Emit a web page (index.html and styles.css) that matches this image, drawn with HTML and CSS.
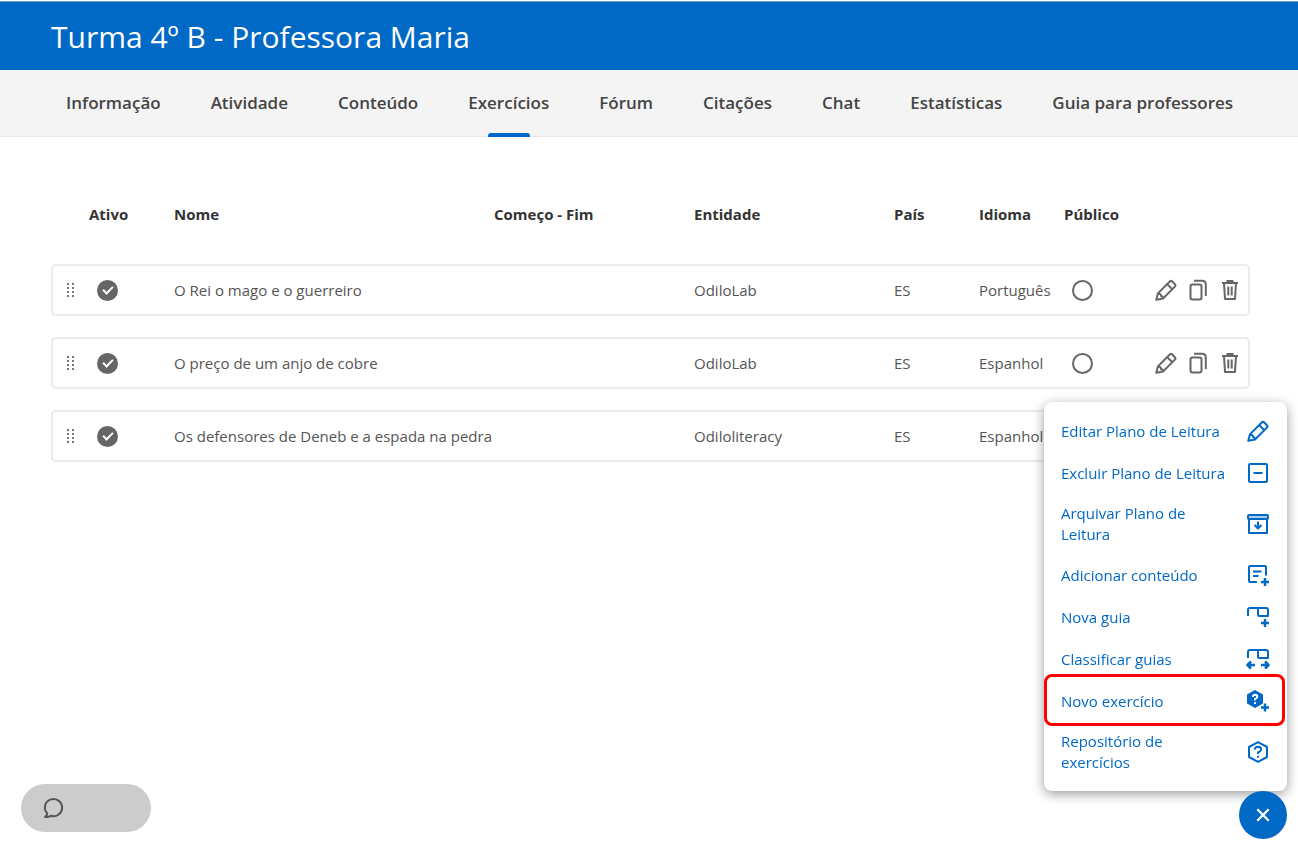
FILE: index.html
```html
<!DOCTYPE html>
<html lang="pt">
<head>
    <meta charset="UTF-8">
    <meta name="viewport" content="width=device-width, initial-scale=1.0">
    <title>Turma 4º B - Professora Maria</title>
    <link rel="stylesheet" href="styles.css">
</head>
<body>
    <!-- shared icons -->
    <svg class="sprite" aria-hidden="true">
        <symbol id="icon-pencil" viewBox="0 0 24 24">
            <path d="M2.3 21.7 L3.9 15.4 L15.8 3.5 Q17 2.3 18.2 3.5 L20.9 6.2 Q22.1 7.4 20.9 8.6 L9 20.5 Z"/>
            <path d="M13.2 6.1 L18.3 11.2 M3.9 15.4 Q7.2 15.6 7 18 Q8.8 18 9 20.5"/>
        </symbol>
        <symbol id="icon-copy" viewBox="0 0 24 24">
            <rect x="4.5" y="6.5" width="11" height="15" rx="2"/>
            <path d="M8 2.8 H16 Q19.8 2.8 19.8 6.6 V18"/>
        </symbol>
        <symbol id="icon-trash" viewBox="0 0 24 24">
            <path d="M4 5 H20 M8.5 3 H15.5 M6 5 L7 21 H17 L18 5 M10.3 8.5 V17.5 M13.7 8.5 V17.5"/>
        </symbol>
        <symbol id="icon-drag" viewBox="0 0 8 15">
            <path d="M0 0h2v2H0z M5 0h2v2H5z M0 4h2v2H0z M5 4h2v2H5z M0 8h2v2H0z M5 8h2v2H5z M0 12h2v2H0z M5 12h2v2H5z"/>
        </symbol>
    </svg>

    <header class="page-header">
        <h1>Turma 4º B - Professora Maria</h1>
    </header>
    <nav class="tabs">
        <a href="#">Informação</a>
        <a href="#">Atividade</a>
        <a href="#">Conteúdo</a>
        <a href="#" class="active" aria-current="page">Exercícios</a>
        <a href="#">Fórum</a>
        <a href="#">Citações</a>
        <a href="#">Chat</a>
        <a href="#">Estatísticas</a>
        <a href="#">Guia para professores</a>
    </nav>

    <main>
        <table class="exercises">
            <colgroup>
                <col class="col-drag">
                <col class="col-small">
                <col class="col-name">
                <col class="col-large">
                <col class="col-large">
                <col class="col-small">
                <col class="col-small">
                <col class="col-small">
                <col class="col-actions">
            </colgroup>
            <thead>
                <tr>
                    <td></td>
                    <th scope="col">Ativo</th>
                    <th scope="col">Nome</th>
                    <th scope="col">Começo - Fim</th>
                    <th scope="col">Entidade</th>
                    <th scope="col">País</th>
                    <th scope="col">Idioma</th>
                    <th scope="col">Público</th>
                    <td></td>
                </tr>
            </thead>
            <tbody>
                <tr>
                    <td><svg class="drag"><use href="#icon-drag"/></svg></td>
                    <td><input type="checkbox" class="round-check" aria-label="Ativo" checked></td>
                    <td>O Rei o mago e o guerreiro</td>
                    <td></td>
                    <td>OdiloLab</td>
                    <td>ES</td>
                    <td>Português</td>
                    <td><input type="checkbox" class="round-check" aria-label="Público"></td>
                    <td>
                        <div class="actions">
                            <button type="button" aria-label="Editar"><svg class="icon"><use href="#icon-pencil"/></svg></button>
                            <button type="button" aria-label="Copiar"><svg class="icon"><use href="#icon-copy"/></svg></button>
                            <button type="button" aria-label="Excluir"><svg class="icon"><use href="#icon-trash"/></svg></button>
                        </div>
                    </td>
                </tr>
                <tr>
                    <td><svg class="drag"><use href="#icon-drag"/></svg></td>
                    <td><input type="checkbox" class="round-check" aria-label="Ativo" checked></td>
                    <td>O preço de um anjo de cobre</td>
                    <td></td>
                    <td>OdiloLab</td>
                    <td>ES</td>
                    <td>Espanhol</td>
                    <td><input type="checkbox" class="round-check" aria-label="Público"></td>
                    <td>
                        <div class="actions">
                            <button type="button" aria-label="Editar"><svg class="icon"><use href="#icon-pencil"/></svg></button>
                            <button type="button" aria-label="Copiar"><svg class="icon"><use href="#icon-copy"/></svg></button>
                            <button type="button" aria-label="Excluir"><svg class="icon"><use href="#icon-trash"/></svg></button>
                        </div>
                    </td>
                </tr>
                <tr>
                    <td><svg class="drag"><use href="#icon-drag"/></svg></td>
                    <td><input type="checkbox" class="round-check" aria-label="Ativo" checked></td>
                    <td>Os defensores de Deneb e a espada na pedra</td>
                    <td></td>
                    <td>Odiloliteracy</td>
                    <td>ES</td>
                    <td>Espanhol</td>
                    <td></td>
                    <td></td>
                </tr>
            </tbody>
        </table>
    </main>

    <div class="menu">
        <button type="button">
            <span>Editar Plano de Leitura</span>
            <svg class="icon"><use href="#icon-pencil"/></svg>
        </button>
        <button type="button">
            <span>Excluir Plano de Leitura</span>
            <svg class="icon" viewBox="0 0 24 24"><rect x="3" y="3" width="18" height="18" rx="1"/><path d="M7.5 12 H16.5"/></svg>
        </button>
        <button type="button">
            <span>Arquivar Plano de Leitura</span>
            <svg class="icon" viewBox="0 0 24 24">
                <rect class="tint" x="2" y="3" width="20" height="4" rx="1"/>
                <path d="M3 7 V21 H21 V7 M12 9.5 V16 M8.5 13 L12 16.5 L15.5 13"/>
            </svg>
        </button>
        <button type="button">
            <span>Adicionar conteúdo</span>
            <svg class="icon" viewBox="0 0 24 24">
                <path d="M20 12.5 V4 Q20 3 19 3 H4 Q3 3 3 4 V18 Q3 19 4 19 H11 M7 8.5 H15.5 M7 13 H12.5"/>
                <path class="bold" d="M15 19 H23 M19 15 V23"/>
            </svg>
        </button>
        <button type="button">
            <span>Nova guia</span>
            <svg class="icon" viewBox="0 0 24 24">
                <path d="M2 11 V5 Q2 3 4 3 H20 Q22 3 22 5 V11 H13.5 Q12 11 12 9.5 V3"/>
                <path class="bold" d="M15 18 H23 M19 14 V22"/>
            </svg>
        </button>
        <button type="button">
            <span>Classificar guias</span>
            <svg class="icon" viewBox="0 0 24 24">
                <path d="M2 11 V5 Q2 3 4 3 H20 Q22 3 22 5 V11 H13.5 Q12 11 12 9.5 V3"/>
                <path class="bold" d="M9 18 H2 M5 14.5 L1.5 18 L5 21.5 M15 18 H22 M19 14.5 L22.5 18 L19 21.5"/>
            </svg>
        </button>
        <button type="button" class="highlight">
            <span>Novo exercício</span>
            <svg class="icon" viewBox="0 0 24 24">
                <path class="solid" d="M9 2 L16 6 V14 L9 18 L2 14 V6 Z"/>
                <path class="mark" d="M6.8 7.8 Q7 5.8 9.2 5.8 Q11.3 6 11.3 7.8 Q11.2 9.3 9 10 V11.5 M9 13.2 V15"/>
                <path class="bold" d="M15 18.5 H23 M19 14.5 V22.5"/>
            </svg>
        </button>
        <button type="button">
            <span>Repositório de exercícios</span>
            <svg class="icon" viewBox="0 0 24 24">
                <path d="M12 2.2 L21 7 V17 L12 21.8 L3 17 V7 Z"/>
                <path d="M8.7 9.5 Q9 6.8 12 6.8 Q15.2 7 15.2 9.5 Q15 11.2 12 12.4 V14 M12 15.8 V17.8"/>
            </svg>
        </button>
    </div>
    <button type="button" class="close-button" aria-label="Fechar">
        <svg viewBox="0 0 14 14"><path d="M2 2 L12 12 M12 2 L2 12"/></svg>
    </button>

    <button type="button" class="chat-button" aria-label="Ajuda">
        <svg class="icon" viewBox="0 0 24 24"><path d="M3 20.8 Q5.3 19.5 5.2 17.5 A8.6 8.6 0 1 1 8.8 19.8 Q6 21.4 3 20.8 Z"/></svg>
    </button>
</body>
</html>
```
FILE: styles.css
```css
body {
    font-family: "Open Sans", "Noto Sans", sans-serif;
    font-size: 15px;
    color: #555;
    background-color: #fff;
    margin: 0;
    padding-top: 1px;
}
button {
    font: inherit;
    color: inherit;
    padding: 0;
    border: none;
    background: none;
    cursor: pointer;
}
.sprite {
    display: none;
}
.icon {
    flex: none;
    display: block;
    width: 24px;
    height: 24px;
    fill: none;
    stroke: currentColor;
    stroke-width: 2;
    stroke-linejoin: round;
}
.page-header {
    box-sizing: border-box;
    height: 69px;
    padding: 0 51px;
    border-top: 1px solid #6f9fcd;
    background-color: #0068c5;
    color: #fff;
}
.page-header h1 {
    margin: 0;
    font-size: 30px;
    font-weight: 400;
    line-height: 70px;
}
.tabs {
    display: flex;
    gap: 50px;
    padding: 0 66px;
    border-bottom: 1px solid #e8e8e8;
    background-color: #f4f4f4;
}
.tabs a {
    position: relative;
    color: #444;
    font-size: 17px;
    font-weight: 600;
    line-height: 66px;
    text-decoration: none;
    white-space: nowrap;
}
.tabs .active::after {
    content: "";
    position: absolute;
    left: calc(50% - 21px);
    bottom: -1px;
    width: 42px;
    height: 4px;
    border-radius: 3px 3px 0 0;
    background-color: #0068c5;
}
main {
    padding: 31px 48px 0 51px;
}
.exercises {
    width: 100%;
    table-layout: fixed;
    border-collapse: separate;
    border-spacing: 0 21px;
}
.col-drag {
    width: 38px;
}
.col-small {
    width: 85px;
}
.col-large {
    width: 200px;
}
.col-actions {
    width: 101px;
}
.exercises th, .exercises td {
    box-sizing: border-box;
    padding: 0;
    text-align: left;
    white-space: nowrap;
}
.exercises th {
    height: 54px;
    padding-bottom: 4px;
    color: #333;
    font-weight: 700;
}
.exercises tbody td {
    height: 52px;
    border: solid #ebebeb;
    border-width: 2px 0;
}
.exercises tbody td:first-child {
    padding-left: 14px;
    border-left-width: 2px;
    border-radius: 5px 0 0 5px;
}
.exercises tbody td:last-child {
    padding-right: 6px;
    border-right-width: 2px;
    border-radius: 0 5px 5px 0;
}
.drag {
    display: block;
    width: 8px;
    height: 15px;
    fill: #777;
}
.round-check {
    appearance: none;
    display: block;
    position: relative;
    box-sizing: border-box;
    width: 21px;
    height: 21px;
    margin: 0 8px;
    border: 2px solid #666;
    border-radius: 50%;
}
.round-check:checked {
    background-color: #666;
}
.round-check:checked::after {
    content: "";
    position: absolute;
    left: 4px;
    top: 4px;
    width: 8px;
    height: 4px;
    border: solid #fff;
    border-width: 0 0 2px 2px;
    transform: rotate(-45deg);
}
.actions {
    display: flex;
    justify-content: flex-end;
    gap: 8px;
    color: #666;
}
.menu {
    position: fixed;
    right: 11px;
    bottom: 52px;
    box-sizing: border-box;
    width: 243px;
    padding: 8px 0 9px;
    border-radius: 8px;
    background-color: #fff;
    box-shadow: 0 3px 12px rgba(0, 0, 0, 0.4);
}
.menu button {
    position: relative;
    display: flex;
    justify-content: space-between;
    align-items: center;
    width: 100%;
    min-height: 42px;
    padding: 9px 17px;
    color: #0068c5;
    line-height: 21px;
    text-align: left;
}
.menu span {
    max-width: 170px;
}
.menu .highlight::after {
    content: "";
    position: absolute;
    inset: -6px 2px -4px 0;
    border: 3px solid #f00;
    border-radius: 8px;
}
.icon .tint {
    fill: #a9cbeb;
}
.icon .solid {
    fill: currentColor;
}
.icon .mark {
    stroke: #fff;
}
.icon .bold {
    stroke-width: 2.5;
}
.close-button {
    position: fixed;
    right: 11px;
    bottom: 4px;
    display: flex;
    justify-content: center;
    align-items: center;
    width: 48px;
    height: 48px;
    border-radius: 50%;
    background-color: #0068c5;
}
.close-button svg {
    width: 16px;
    height: 16px;
    stroke: #fff;
    stroke-width: 2;
}
.chat-button {
    position: fixed;
    left: 21px;
    bottom: 11px;
    width: 130px;
    height: 48px;
    padding-left: 21px;
    border-radius: 24px;
    background-color: #ccc;
    color: #555;
}
```
